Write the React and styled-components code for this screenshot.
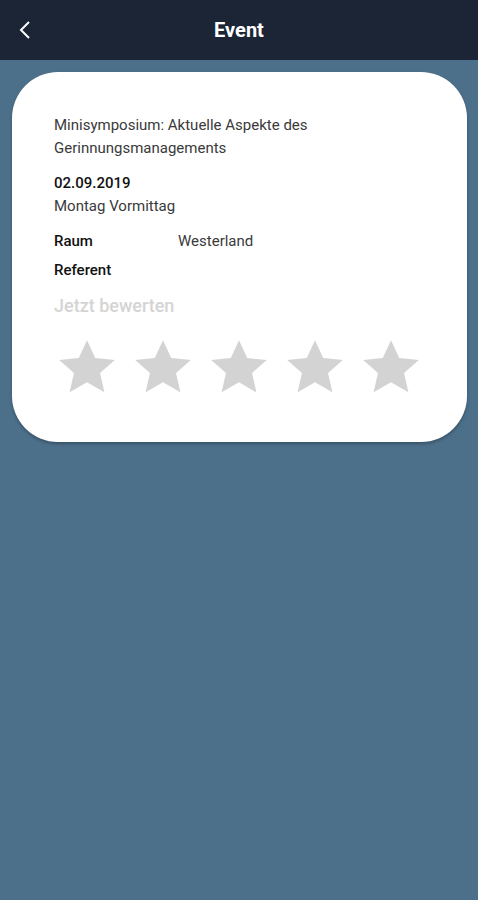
import React from 'react';
import styled, { createGlobalStyle } from 'styled-components';

const GlobalStyle = createGlobalStyle`
  html, body {
    margin: 0;
    padding: 0;
    background: #4c6f8a;
    font-family: Roboto, "Liberation Sans", sans-serif;
  }
`;

const Screen = styled.div`
  width: 478px;
  min-height: 900px;
  background: #4c6f8a;
`;

const TopBar = styled.header`
  height: 60px;
  background: #1b2536;
  display: grid;
  grid-template-columns: 52px 1fr 52px;
  align-items: center;
`;

const BackButton = styled.button`
  background: none;
  border: 0;
  padding: 0 0 0 18px;
  height: 60px;
  display: flex;
  align-items: center;
  cursor: pointer;
`;

const Title = styled.h1`
  margin: 0;
  text-align: center;
  color: #fff;
  font-size: 20px;
  font-weight: 700;
`;

const Card = styled.section`
  margin: 12px 11px 0 12px;
  background: #fff;
  border-radius: 46px;
  padding: 42px 42px 47px 42px;
  box-shadow: 0 2px 3px rgba(0, 0, 0, 0.25);
`;

const Text = styled.p`
  margin: 0;
  font-size: 15px;
  line-height: 23px;
  color: ${(p) => (p.$strong ? '#111' : '#3a3a3a')};
  font-weight: ${(p) => (p.$strong ? 500 : 400)};
`;

const Block = styled.div`
  margin-bottom: ${(p) => p.$gap || 0}px;
`;

const InfoRow = styled.div`
  display: grid;
  grid-template-columns: 124px 1fr;
  font-size: 15px;
  line-height: 23px;
  margin-bottom: 6px;
`;

const Label = styled.span`
  color: #111;
  font-weight: 500;
`;

const Value = styled.span`
  color: #3a3a3a;
`;

const RateLabel = styled.div`
  margin-top: 12px;
  font-size: 18px;
  font-weight: 500;
  color: #d4d4d4;
  line-height: 24px;
`;

const Stars = styled.div`
  display: flex;
  gap: 18px;
  margin-top: 20px;
  padding-left: 4px;
`;

const Star = () => (
  <svg width="58" height="57" viewBox="0 0 24 23">
    <path
      d="M12 0.6l3.4 7.4 8.1 0.8-6.1 5.4 1.8 8-7.2-4.2-7.2 4.2 1.8-8L0.5 8.8l8.1-0.8z"
      fill="#d3d3d3"
    />
  </svg>
);

export default function App() {
  return (
    <Screen>
      <GlobalStyle />
      <TopBar>
        <BackButton aria-label="Zurück">
          <svg width="14" height="20" viewBox="0 0 14 20">
            <path d="M11 2L3 10l8 8" fill="none" stroke="#fff" strokeWidth="2" />
          </svg>
        </BackButton>
        <Title>Event</Title>
        <span />
      </TopBar>
      <Card>
        <Block $gap={12}>
          <Text>Minisymposium: Aktuelle Aspekte des Gerinnungsmanagements</Text>
        </Block>
        <Block $gap={12}>
          <Text $strong>02.09.2019</Text>
          <Text>Montag Vormittag</Text>
        </Block>
        <InfoRow>
          <Label>Raum</Label>
          <Value>Westerland</Value>
        </InfoRow>
        <InfoRow>
          <Label>Referent</Label>
          <Value />
        </InfoRow>
        <RateLabel>Jetzt bewerten</RateLabel>
        <Stars>
          {[1, 2, 3, 4, 5].map((n) => (
            <Star key={n} />
          ))}
        </Stars>
      </Card>
    </Screen>
  );
}
